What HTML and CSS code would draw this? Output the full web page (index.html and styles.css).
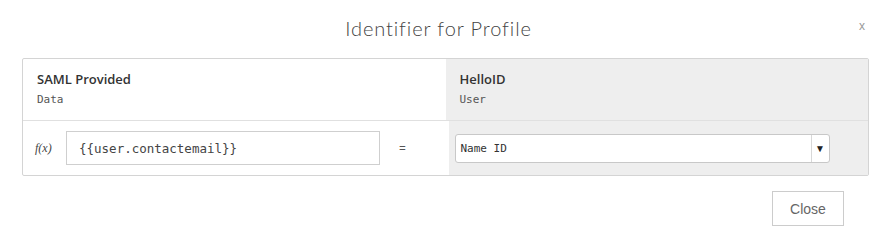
FILE: index.html
```html
<!DOCTYPE html>
<html lang="en">
<head>
    <meta charset="UTF-8">
    <meta name="viewport" content="width=device-width, initial-scale=1.0">
    <title>Identifier for Profile</title>
    <link rel="stylesheet" href="styles.css">
</head>
<body>
    <div class="modal">
        <div class="modal-header">
            <h2 class="modal-title">Identifier for Profile</h2>
            <span class="modal-close">x</span>
        </div>

        <div class="mapping">
            <div class="mapping-head">
                <div class="col col-source">
                    <div class="col-title">SAML Provided</div>
                    <div class="col-sub">Data</div>
                </div>
                <div class="col col-target">
                    <div class="col-title">HelloID</div>
                    <div class="col-sub">User</div>
                </div>
            </div>
            <div class="mapping-row">
                <div class="col col-source row-source">
                    <span class="fx">f(x)</span>
                    <div class="expr">{{user.contactemail}}</div>
                    <span class="equals">=</span>
                </div>
                <div class="col col-target row-target">
                    <div class="select">
                        <span class="select-value">Name ID</span>
                        <span class="select-arrow">&#9660;</span>
                    </div>
                </div>
            </div>
        </div>

        <div class="modal-footer">
            <button class="btn">Close</button>
        </div>
    </div>
</body>
</html>
```

FILE: styles.css
```css
body {
    margin: 0;
    background: #fff;
    font-family: "Open Sans", Arial, sans-serif;
    color: #333;
}

.modal {
    padding: 0 19px 0 22px;
}

.modal-header {
    height: 58px;
    display: flex;
    align-items: center;
    justify-content: center;
    position: relative;
    padding-right: 14px;
}

.modal-title {
    margin: 0;
    font-family: Lato, sans-serif;
    font-weight: 300;
    font-size: 20px;
    letter-spacing: 0.9px;
    color: #444;
    padding-bottom: 2px;
}

.modal-close {
    position: absolute;
    right: 4px;
    top: 19px;
    font-family: "Liberation Sans", Arial, sans-serif;
    font-size: 12px;
    color: #999;
}

.mapping {
    border: 1px solid #d4d4d4;
    border-radius: 2px;
}

.mapping-head,
.mapping-row {
    display: flex;
}

.mapping-head {
    height: 61px;
    border-bottom: 1px solid #e0e0e0;
}

.mapping-row {
    height: 54px;
}

.col {
    flex: 1;
    box-sizing: border-box;
}

.col-target {
    background: #eeeeee;
}

.mapping-head .col {
    padding: 11px 14px 0;
}

.col-title {
    font-size: 13px;
    font-weight: 600;
    color: #333;
    line-height: 19px;
}

.col-sub {
    margin-top: 3px;
    font-family: "DejaVu Sans Mono", monospace;
    font-size: 11px;
    color: #555;
    line-height: 16px;
}

.row-source {
    display: flex;
    align-items: center;
    padding-left: 12px;
}

.fx {
    width: 31px;
    font-family: "Liberation Serif", serif;
    font-style: italic;
    font-size: 12px;
    color: #444;
}

.expr {
    width: 314px;
    height: 34px;
    box-sizing: border-box;
    border: 1px solid #cfcfcf;
    padding: 0 12px;
    display: flex;
    align-items: center;
    font-family: "DejaVu Sans Mono", monospace;
    font-size: 12.5px;
    color: #444;
}

.equals {
    margin-left: 19px;
    font-size: 12px;
    color: #555;
}

.row-target {
    display: flex;
    align-items: center;
    padding-left: 6px;
}

.select {
    width: 375px;
    height: 29px;
    box-sizing: border-box;
    border: 1px solid #c8c8c8;
    border-radius: 3px;
    background: #fff;
    display: flex;
    align-items: center;
}

.select-value {
    flex: 1;
    padding-left: 5px;
    font-family: "DejaVu Sans Mono", monospace;
    font-size: 11px;
    color: #333;
}

.select-arrow {
    width: 17px;
    height: 100%;
    border-left: 1px solid #d8d8d8;
    display: flex;
    align-items: center;
    justify-content: center;
    font-size: 10px;
    color: #222;
}

.modal-footer {
    display: flex;
    justify-content: flex-end;
    padding: 15px 25px 0 0;
}

.btn {
    width: 72px;
    height: 35px;
    border: 1px solid #cccccc;
    background: #fff;
    font-family: "Liberation Sans", Arial, sans-serif;
    font-size: 14px;
    color: #666;
    cursor: pointer;
}
```
